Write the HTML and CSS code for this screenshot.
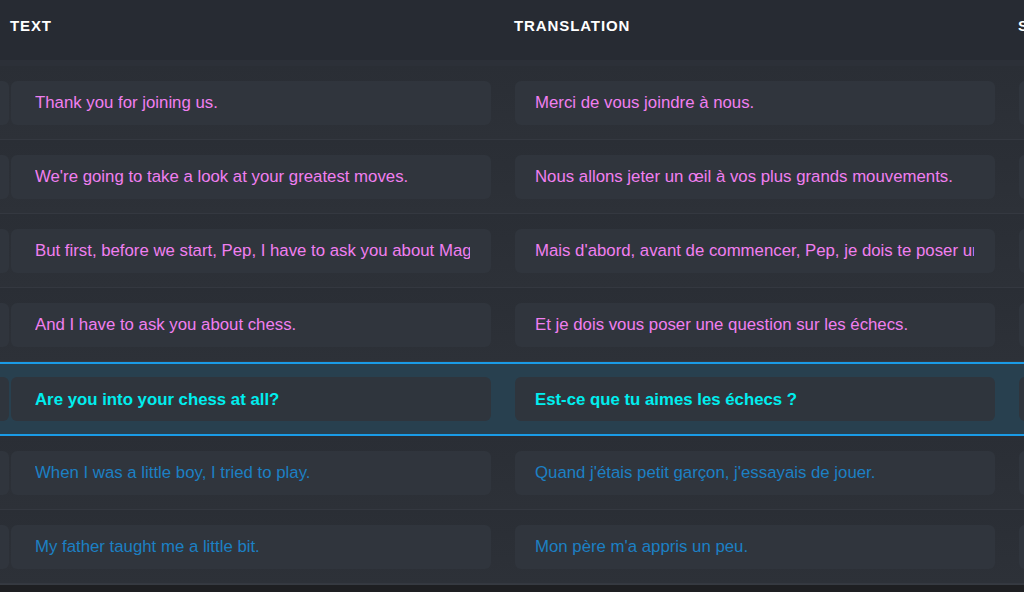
FILE: index.html
```html
<!DOCTYPE html>
<html lang="en">
<head>
    <meta charset="UTF-8">
    <meta name="viewport" content="width=device-width, initial-scale=1.0">
    <title>Subtitles</title>
    <link rel="stylesheet" href="styles.css">
</head>
<body>
    <div class="table">
        <div class="head">
            <div class="stub"></div>
            <div class="head-cell">TEXT</div>
            <div class="head-cell">TRANSLATION</div>
            <div class="head-cell">STYLE</div>
        </div>
        <div class="head-strip"></div>

        <div class="row past">
            <div class="stub-box"></div>
            <div class="cell text"><div class="box"><span>Thank you for joining us.</span></div></div>
            <div class="cell"><div class="box"><span>Merci de vous joindre à nous.</span></div></div>
            <div class="cell"><div class="box"></div></div>
        </div>
        <div class="row past">
            <div class="stub-box"></div>
            <div class="cell text"><div class="box"><span>We're going to take a look at your greatest moves.</span></div></div>
            <div class="cell"><div class="box"><span>Nous allons jeter un œil à vos plus grands mouvements.</span></div></div>
            <div class="cell"><div class="box"></div></div>
        </div>
        <div class="row past">
            <div class="stub-box"></div>
            <div class="cell text"><div class="box"><span>But first, before we start, Pep, I have to ask you about Magnus Carlsen.</span></div></div>
            <div class="cell"><div class="box"><span>Mais d'abord, avant de commencer, Pep, je dois te poser une question sur Magnus Carlsen.</span></div></div>
            <div class="cell"><div class="box"></div></div>
        </div>
        <div class="row past">
            <div class="stub-box"></div>
            <div class="cell text"><div class="box"><span>And I have to ask you about chess.</span></div></div>
            <div class="cell"><div class="box"><span>Et je dois vous poser une question sur les échecs.</span></div></div>
            <div class="cell"><div class="box"></div></div>
        </div>
        <div class="row current">
            <div class="stub-box"></div>
            <div class="cell text"><div class="box"><span>Are you into your chess at all?</span></div></div>
            <div class="cell"><div class="box"><span>Est-ce que tu aimes les échecs ?</span></div></div>
            <div class="cell"><div class="box"></div></div>
        </div>
        <div class="row next">
            <div class="stub-box"></div>
            <div class="cell text"><div class="box"><span>When I was a little boy, I tried to play.</span></div></div>
            <div class="cell"><div class="box"><span>Quand j'étais petit garçon, j'essayais de jouer.</span></div></div>
            <div class="cell"><div class="box"></div></div>
        </div>
        <div class="row next">
            <div class="stub-box"></div>
            <div class="cell text"><div class="box"><span>My father taught me a little bit.</span></div></div>
            <div class="cell"><div class="box"><span>Mon père m'a appris un peu.</span></div></div>
            <div class="cell"><div class="box"></div></div>
        </div>
    </div>
    <div class="footer"></div>
</body>
</html>
```

FILE: styles.css
```css
* {
    margin: 0;
    padding: 0;
    box-sizing: border-box;
    font-family: 'Liberation Sans', Arial, sans-serif;
}

body {
    background-color: #1e1f22;
    width: 1024px;
    height: 592px;
    overflow: hidden;
}

.table {
    width: 1024px;
    overflow: hidden;
}

.head {
    display: flex;
    height: 60px;
    align-items: center;
    background-color: #272b33;
}

.stub {
    width: 10px;
    flex-shrink: 0;
}

.head-cell {
    width: 504px;
    flex-shrink: 0;
    color: #ffffff;
    font-size: 15px;
    font-weight: bold;
    letter-spacing: 0.9px;
    padding-bottom: 10px;
}

.head-strip {
    height: 6px;
    background-color: #2c3038;
}

.row {
    display: flex;
    align-items: center;
    height: 74px;
    background: linear-gradient(#2a2e35, #2d3138);
    border-bottom: 1px solid #343840;
}

.stub-box {
    width: 9px;
    height: 44px;
    flex-shrink: 0;
    background-color: #30353d;
    border-radius: 0 6px 6px 0;
}

.cell {
    width: 504px;
    flex-shrink: 0;
    padding-left: 2px;
}

.box {
    width: 480px;
    height: 44px;
    background-color: #30353d;
    border-radius: 6px;
    padding: 0 21px 0 20px;
    display: flex;
    align-items: center;
    font-size: 16.8px;
    padding-top: 1px;
}

.cell.text .box {
    padding-left: 24px;
}

.box span {
    display: block;
    white-space: nowrap;
    overflow: hidden;
}

.past .box {
    color: #f07ff0;
}

.current {
    background: #28404f;
    border-top: 2px solid #1a9be6;
    border-bottom: 2px solid #1a9be6;
}

.current .box,
.current .stub-box {
    background-color: #2f353d;
}

.current .box {
    color: #00eeee;
    font-weight: bold;
}

.next .box {
    color: #1c80c4;
}

.footer {
    height: 10px;
    border-top: 1px solid #363a41;
    background-color: #1e1f22;
}
```
